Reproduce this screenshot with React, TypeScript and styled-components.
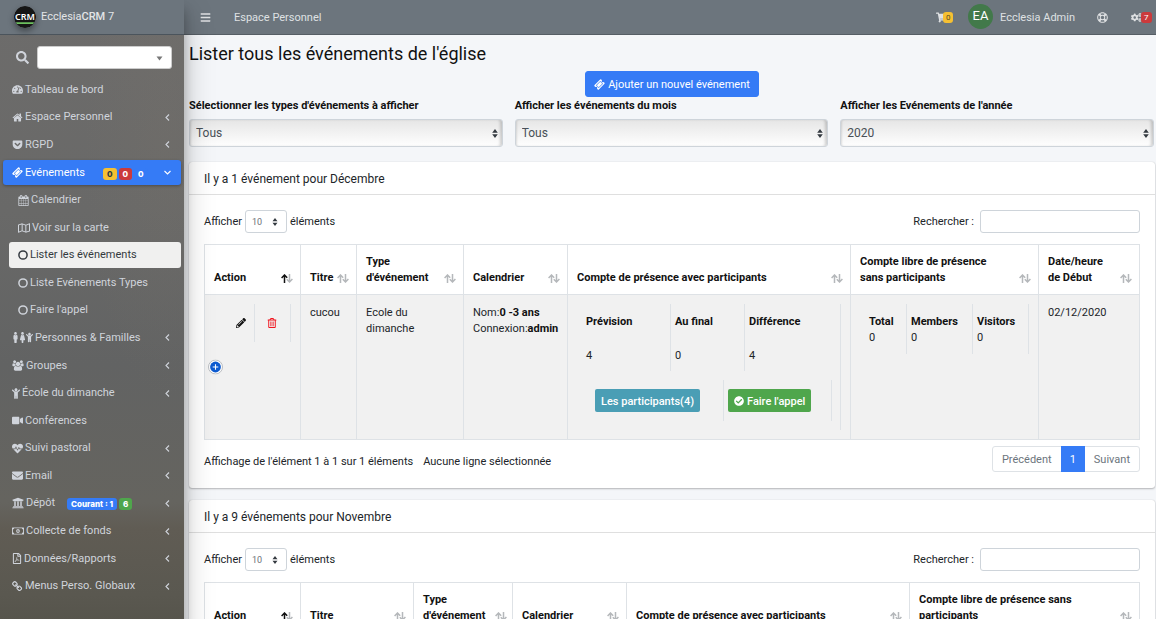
import React from "react";
import styled, { createGlobalStyle, css } from "styled-components";
import {
  FaBars, FaCheckCircle, FaChild, FaCogs, FaEnvelope, FaFemale,
  FaGetPocket, FaHeartbeat, FaMale, FaPencilAlt, FaRegFilePdf,
  FaRegLifeRing, FaRegMap, FaRegMoneyBillAlt, FaRegTrashAlt, FaSearch, FaShoppingCart,
  FaTachometerAlt, FaUniversity, FaVideo,
} from "react-icons/fa";

const GlobalStyle = createGlobalStyle`
  *, *::before, *::after { box-sizing: border-box; }
  body {
    margin: 0;
    background: #f4f6f9;
    color: #212529;
    font-family: Roboto, "Liberation Sans", sans-serif;
    font-size: 11px;
    line-height: 16px;
  }
  button, input, select { font-family: inherit; }
  ul { list-style: none; margin: 0; padding: 0; }
`;

const Shell = styled.div`
  display: grid;
  grid-template-columns: 184px minmax(0, 1fr);
  height: 100vh;
  overflow: hidden;
`;

/* ---------- sidebar ---------- */

const Sidebar = styled.aside`
  z-index: 2;
  display: flex;
  flex-direction: column;
  color: #d0d4db;
  background:
    radial-gradient(ellipse at 90% 22%, rgba(140, 125, 105, 0.1), transparent 35%),
    linear-gradient(#6d6c6b 0%, #696968 32%, #626363 55%, #65645f 76%, #605c54 80%, #5a5850 90%, #504f46 100%);
  box-shadow: 0 14px 28px rgba(0, 0, 0, 0.25), 0 10px 10px rgba(0, 0, 0, 0.22);
`;

const Brand = styled.a`
  display: flex;
  align-items: center;
  gap: 5px;
  height: 35px;
  padding: 0 14px;
  border-bottom: 1px solid #4b545c;
  background: #6c757d;
  color: #e3e5e7;
  font-size: 11px;
  text-decoration: none;
  b { font-weight: 500; }
  svg { border-radius: 50%; box-shadow: 0 3px 6px rgba(0, 0, 0, 0.4); }
`;

const SideSearch = styled.div`
  display: flex;
  align-items: center;
  gap: 8px;
  padding: 11px 12px 7px 16px;
  font-size: 13px;
`;

const SearchPick = styled.span`
  position: relative;
  flex: 1;
  display: flex;
  select {
    appearance: none;
    width: 100%;
    height: 23px;
    border: 1px solid #ccc;
    border-radius: 3px;
    background: #fff;
  }
  svg { position: absolute; right: 9px; top: 10px; pointer-events: none; }
`;

const Menu = styled.ul`
  display: grid;
  grid-auto-rows: 1fr;
  min-height: 524px;
`;

const SubMenu = styled.ul`
  display: contents;
`;

const Item = styled.li`
  display: flex;
`;

const MenuLink = styled.a<{ $tone?: "primary" | "light"; $sub?: boolean }>`
  flex: 1;
  display: flex;
  align-items: center;
  gap: 2px;
  margin: 1px 3px 1px ${(p) => (p.$sub ? 9 : 3)}px;
  padding: 0 9px;
  border-radius: 3px;
  color: inherit;
  text-decoration: none;
  ${(p) => p.$tone === "primary" && css`
    background: #357bf6;
    color: #fff;
    box-shadow: 0 1px 3px rgba(0, 0, 0, 0.3);
  `}
  ${(p) => p.$tone === "light" && css`
    background: #f0f0ef;
    color: #343a40;
  `}
`;

const MenuIcon = styled.span`
  display: flex;
  font-size: 11px;
`;

const Slim = styled.span<{ $width: number }>`
  display: flex;
  svg { width: ${(p) => p.$width}px; }
`;

const Chevron = styled.span`
  display: flex;
  margin-left: auto;
`;

const badgeColors = {
  yellow: "#f6c032",
  red: "#cb3a3c",
  blue: "#357bf6",
  green: "#4fa64c",
};

const Badge = styled.span<{ $color: keyof typeof badgeColors }>`
  padding: 0 4px;
  border-radius: 3px;
  background: ${(p) => badgeColors[p.$color]};
  color: ${(p) => (p.$color === "yellow" ? "#343a40" : "#fff")};
  font-family: Inter, sans-serif;
  font-size: 8px;
  font-weight: 800;
  line-height: 12px;
`;

const Badges = styled.span`
  display: flex;
  gap: 2px;
  margin: 2px 0 0 16px;
`;

const SmallBadges = styled(Badges)`
  margin-left: 10px;
`;

/* ---------- main column ---------- */

const Main = styled.div`
  min-width: 0;
  display: flex;
  flex-direction: column;
`;

const TopBar = styled.header`
  flex: none;
  display: flex;
  align-items: center;
  height: 35px;
  padding: 1px 14px 0 16px;
  border-bottom: 1px solid #565e65;
  background: #6c757d;
  color: #dfe1e3;
`;

const BarButton = styled.button`
  position: relative;
  display: flex;
  padding: 0;
  border: 0;
  background: none;
  color: inherit;
  font-size: 11px;
`;

const BarLink = styled.a`
  margin-left: 23px;
  color: inherit;
  text-decoration: none;
`;

const BarRight = styled.div`
  display: flex;
  align-items: center;
  margin-left: auto;
`;

const BarTools = styled.div`
  display: flex;
  gap: 23px;
`;

const BarBadge = styled.span<{ $color: "yellow" | "red" }>`
  position: absolute;
  left: ${(p) => (p.$color === "red" ? 10 : 7)}px;
  top: 0;
  padding: 0 3px;
  border-radius: 3px;
  background: ${(p) => badgeColors[p.$color]};
  color: ${(p) => (p.$color === "yellow" ? "#5b4d24" : "#fff")};
  font-size: 8px;
  line-height: 11px;
`;

const Avatar = styled.span`
  display: grid;
  place-items: center;
  width: 25px;
  height: 25px;
  margin: 0 7px 3px 21px;
  border-radius: 50%;
  background: #42794a;
  color: #fff;
  font-size: 13px;
`;

const UserName = styled.span`
  margin-right: 22px;
`;

const Content = styled.main`
  padding: 9px 1px 0 5px;
`;

const Title = styled.h1`
  margin: 0;
  color: #111;
  font-size: 18px;
  font-weight: 400;
  line-height: 20px;
`;

const AddRow = styled.div`
  display: flex;
  justify-content: center;
  padding-top: 7px;
`;

const AddButton = styled.button`
  display: flex;
  align-items: center;
  gap: 3px;
  height: 26px;
  padding: 0 8px;
  border: 1px solid #357bf6;
  border-radius: 3px;
  background: #357bf6;
  color: #fff;
  font-size: 11px;
`;

const Filters = styled.div`
  display: grid;
  grid-template-columns: repeat(3, minmax(0, 1fr));
  gap: 12px;
  margin: 0 1px 15px 0;
`;

const Field = styled.label`
  display: flex;
  flex-direction: column;
  gap: 5px;
  padding-top: 1px;
  color: #111;
  font-weight: 700;
`;

const PickBox = styled.span`
  position: relative;
  display: flex;
  svg { position: absolute; right: 5px; top: 10px; pointer-events: none; }
`;

const FilterSelect = styled.select`
  appearance: none;
  width: 100%;
  height: 28px;
  padding: 0 6px;
  border: 1px solid #ced4da;
  border-radius: 3px;
  background: linear-gradient(#e6e6e6, #fefefe);
  box-shadow: inset -3px 0 3px -1px rgba(0, 0, 0, 0.18), inset 2px 0 2px -1px rgba(0, 0, 0, 0.12);
  color: #495057;
  font-size: 12px;
`;

const Card = styled.section`
  margin-bottom: 12px;
  border-radius: 3px;
  background: #fff;
  box-shadow: 0 0 1px rgba(0, 0, 0, 0.2), 0 1px 2px rgba(0, 0, 0, 0.25);
`;

const CardTitle = styled.h2`
  margin: 0;
  padding: 9px 15px 7px;
  border-bottom: 1px solid #dfdfdf;
  font-size: 12px;
  font-weight: 400;
  line-height: 16px;
`;

const CardBody = styled.div`
  padding: 15px 15px 16px;
`;

const Tools = styled.div`
  display: flex;
  justify-content: space-between;
  margin-bottom: 11px;
`;

const ToolLabel = styled.label`
  display: flex;
  align-items: center;
  gap: 3px;
`;

const LengthPick = styled.span`
  position: relative;
  display: flex;
  select {
    appearance: none;
    width: 42px;
    height: 23px;
    padding: 0 6px;
    border: 1px solid #ced4da;
    border-radius: 3px;
    background: #fff;
    color: #6c7278;
    font-size: 9px;
  }
  svg { position: absolute; right: 9px; top: 8px; pointer-events: none; }
`;

const SearchInput = styled.input`
  width: 160px;
  height: 23px;
  margin-left: 3px;
  border: 1px solid #ced4da;
  border-radius: 3px;
  background: #fff;
`;

const Grid = styled.table`
  width: 100%;
  table-layout: fixed;
  border-collapse: collapse;
`;

const Th = styled.th`
  height: 50px;
  padding: 8px 7px 8px 9px;
  border: 1px solid #dee2e6;
  color: #111;
  font-weight: 700;
  text-align: left;
  vertical-align: bottom;
`;

const ThInner = styled.span<{ $tight?: boolean }>`
  display: flex;
  align-items: flex-end;
  justify-content: space-between;
  gap: ${(p) => (p.$tight ? 3 : 10)}px;
  svg { flex: none; margin-bottom: 3px; }
`;

const Td = styled.td<{ $nested?: boolean }>`
  position: relative;
  height: 145px;
  padding: ${(p) => (p.$nested ? 9 : 10)}px 9px 9px;
  border: 1px solid #dee2e6;
  background: #f1f1f1;
  vertical-align: top;
  b { color: #111; font-weight: 700; }
`;

const Actions = styled.div`
  display: flex;
  justify-content: flex-end;
`;

const ActionCell = styled.span`
  display: flex;
  align-items: center;
  justify-content: center;
  width: 36px;
  height: 38px;
  padding-right: 1px;
  border-right: 1px solid #dee2e6;
  &:first-child { padding-left: 9px; }
`;

const IconButton = styled.button<{ $danger?: boolean }>`
  display: flex;
  padding: 0;
  border: 0;
  background: none;
  color: ${(p) => (p.$danger ? "#f0141e" : "#111")};
  font-size: 10px;
`;

const ExpandButton = styled.button`
  position: absolute;
  left: 3px;
  top: 50%;
  transform: translateY(-50%);
  display: flex;
  padding: 0;
  border: 0;
  background: none;
`;

const Presence = styled.div`
  height: 126px;
  border-right: 1px solid #dee2e6;
`;

const Stats = styled.dl<{ $cols: string; $tall?: boolean }>`
  display: grid;
  grid-template-columns: ${(p) => p.$cols};
  margin: 0;
  div {
    padding: ${(p) => (p.$tall ? "10px 4px 7px" : "10px 4px 8px")};
    border-right: 1px solid #dee2e6;
  }
  div:first-child { padding-left: 9px; }
  div:last-child { ${(p) => p.$tall && "border-right: 0;"} }
  dt { color: #111; font-weight: 700; }
  dd { margin: ${(p) => (p.$tall ? 18 : 0)}px 0 0; }
`;

const PresenceActions = styled.div`
  display: grid;
  grid-template-columns: 129px 108px;
  margin: 9px 0 0 18px;
  span {
    height: 41px;
    padding: 9px 4px 9px 0;
    border-right: 1px solid #dee2e6;
  }
  span + span { padding-left: 4px; }
`;

const SmallButton = styled.button<{ $green?: boolean }>`
  display: flex;
  align-items: center;
  gap: 3px;
  height: 23px;
  padding: 1px 6px 0;
  border: 0;
  border-radius: 2px;
  background: ${(p) => (p.$green ? "#4fa64c" : "#4a9eb5")};
  color: #fff;
  font-size: 11px;
  font-weight: 500;
  white-space: nowrap;
  svg { font-size: 10px; }
`;

const Foot = styled.div`
  display: flex;
  align-items: center;
  gap: 10px;
  margin-top: 6px;
`;

const FootText = styled.span`
  padding-top: 5px;
`;

const Pager = styled.nav`
  display: flex;
  margin-left: auto;
  border: 1px solid #dee2e6;
  border-radius: 3px;
`;

const PageButton = styled.button<{ $on?: boolean }>`
  height: 26px;
  margin: -1px 0;
  padding: 0 9px;
  border: 0;
  background: ${(p) => (p.$on ? "#357bf6" : "transparent")};
  color: ${(p) => (p.$on ? "#fff" : "#6c757d")};
  font-size: 11px;
`;

/* ---------- icons ---------- */

const legacyPaths = {
  home: "M1472 992v480q0 26-19 45t-45 19h-384v-384h-256v384h-384q-26 0-45-19t-19-45v-480q0-1 .5-3t.5-3l575-474 575 474q1 2 1 6zm223-69l-62 74q-8 9-21 11h-3q-13 0-21-7l-692-577-692 577q-12 8-24 7-13-2-21-11l-62-74q-8-10-7-23.5t11-21.5l719-599q32-26 76-26t76 26l244 204v-195q0-14 9-23t23-9h192q14 0 23 9t9 23v408l219 182q10 8 11 21.5t-7 23.5z",
  calendar: "M192 1664h288v-288h-288v288zm352 0h320v-288h-320v288zm-352-352h288v-320h-288v320zm352 0h320v-320h-320v320zm-352-384h288v-288h-288v288zm736 736h320v-288h-320v288zm-384-736h320v-288h-320v288zm768 736h288v-288h-288v288zm-384-352h320v-320h-320v320zm-352-864v-288q0-13-9.5-22.5t-22.5-9.5h-64q-13 0-22.5 9.5t-9.5 22.5v288q0 13 9.5 22.5t22.5 9.5h64q13 0 22.5-9.5t9.5-22.5zm736 864h288v-320h-288v320zm-384-384h320v-288h-320v288zm384 0h288v-288h-288v288zm32-480v-288q0-13-9.5-22.5t-22.5-9.5h-64q-13 0-22.5 9.5t-9.5 22.5v288q0 13 9.5 22.5t22.5 9.5h64q13 0 22.5-9.5t9.5-22.5zm384-64v1280q0 52-38 90t-90 38h-1408q-52 0-90-38t-38-90v-1280q0-52 38-90t90-38h128v-96q0-66 47-113t113-47h64q66 0 113 47t47 113v96h384v-96q0-66 47-113t113-47h64q66 0 113 47t47 113v96h128q52 0 90 38t38 90z",
  users: "M657 896q-162 5-265 128h-134q-82 0-138-40.5t-56-118.5q0-353 124-353 6 0 43.5 21t97.5 42.5 119 21.5q67 0 133-23-5 37-5 66 0 139 81 256zm1071 637q0 120-73 189.5t-194 69.5h-874q-121 0-194-69.5t-73-189.5q0-53 3.5-103.5t14-109 26.5-108.5 43-97.5 62-81 85.5-53.5 111.5-20q10 0 43 21.5t73 48 107 48 135 21.5 135-21.5 107-48 73-48 43-21.5q61 0 111.5 20t85.5 53.5 62 81 43 97.5 26.5 108.5 14 109 3.5 103.5zm-1024-1277q0 106-75 181t-181 75-181-75-75-181 75-181 181-75 181 75 75 181zm704 384q0 159-112.5 271.5t-271.5 112.5-271.5-112.5-112.5-271.5 112.5-271.5 271.5-112.5 271.5 112.5 112.5 271.5zm576 225q0 78-56 118.5t-138 40.5h-134q-103-123-265-128 81-117 81-256 0-29-5-66 66 23 133 23 59 0 119-21.5t97.5-42.5 43.5-21q124 0 124 353zm-128-609q0 106-75 181t-181 75-181-75-75-181 75-181 181-75 181 75 75 181z",
  ticket: "M1024 452l316 316-572 572-316-316zm-211 979l618-618q19-19 19-45t-19-45l-362-362q-18-18-45-18t-45 18l-618 618q-19 19-19 45t19 45l362 362q18 18 45 18t45-18zm889-637l-907 908q-37 37-90.5 37t-90.5-37l-126-126q56-56 56-136t-56-136-136-56-136 56l-125-126q-37-37-37-90.5t37-90.5l907-906q37-37 90.5-37t90.5 37l125 125q-56 56-56 136t56 136 136 56 136-56l126 125q37 37 37 90.5t-37 90.5z",
  chain: "M1456 1216q0-40-28-68l-208-208q-28-28-68-28-42 0-72 32 3 3 19 18.5t21.5 21.5 15 19 13 25.5 3.5 27.5q0 40-28 68t-68 28q-15 0-27.5-3.5t-25.5-13-19-15-21.5-21.5-18.5-19q-33 31-33 73 0 40 28 68l206 207q27 27 68 27 40 0 68-26l147-146q28-28 28-67zm-703-705q0-40-28-68l-206-207q-28-28-68-28-39 0-68 27l-147 146q-28 28-28 67 0 40 28 68l208 208q27 27 68 27 42 0 72-31-3-3-19-18.5t-21.5-21.5-15-19-13-25.5-3.5-27.5q0-40 28-68t68-28q15 0 27.5 3.5t25.5 13 19 15 21.5 21.5 18.5 19q33-31 33-73zm895 705q0 120-85 203l-147 146q-83 83-203 83-121 0-204-85l-206-207q-83-83-83-203 0-123 88-209l-88-88q-86 88-208 88-120 0-204-84l-208-208q-84-84-84-204t85-203l147-146q83-83 203-83 121 0 204 85l206 207q83 83 83 203 0 123-88 209l88 88q86-88 208-88 120 0 204 84l208 208q84 84 84 204z",
};

const LegacyIcon = ({ name, width = 12, box = 1792 }: {
  name: keyof typeof legacyPaths;
  width?: number;
  box?: number;
}) => (
  <svg width={width} height="11" viewBox={`0 0 ${box} 1792`} fill="currentColor">
    <path d={legacyPaths[name]} />
  </svg>
);

const FamilyIcon = () => (
  <Slim $width={7}><FaMale /><FaFemale /><FaChild /></Slim>
);

const CircleIcon = () => (
  <svg width="10" height="10" viewBox="0 0 10 10" fill="none" stroke="currentColor" strokeWidth="1.5">
    <circle cx="5" cy="5" r="4.1" />
  </svg>
);

const Angle = ({ down }: { down?: boolean }) => (
  <svg width="9" height="9" viewBox="0 0 9 9" fill="none" stroke="currentColor" strokeWidth="1.1">
    <path d={down ? "M1.5 3L4.5 6L7.5 3" : "M6 1.5L3 4.5L6 7.5"} />
  </svg>
);

const UpDown = ({ size = 9 }: { size?: number }) => (
  <svg width="6" height={size} viewBox="0 0 6 9" fill="#343a40"><path d="M3 0L5.8 3.7H0.2zM3 9L0.2 5.3H5.8z" /></svg>
);

const SortIcon = ({ active }: { active?: boolean }) => (
  <svg width="12" height="9" viewBox="0 0 12 9" fill="none" strokeWidth="1.5">
    <path d="M3.5 9V1M0.6 4L3.5 1L6.2 3.8" stroke={active ? "#111" : "#b5b8bb"} />
    <path d="M8.5 0V8M5.8 5.2L8.5 8L11.4 5" stroke="#b5b8bb" />
  </svg>
);

const Logo = () => (
  <svg width="22" height="22" viewBox="0 0 22 22">
    <circle cx="11" cy="11" r="11" fill="#161616" />
    <text x="11" y="14" textAnchor="middle" fontFamily="Noto Sans, sans-serif" fontSize="9" fontWeight="600" fill="#fff">CRM</text>
    <path d="M2 16.2H20L19.2 18H2.8z" fill="#6cc05f" />
  </svg>
);

const PlusIcon = () => (
  <svg width="15" height="15" viewBox="0 0 15 15">
    <circle cx="7.5" cy="7.5" r="7" fill="#fff" stroke="#b9bcc0" />
    <circle cx="7.5" cy="7.5" r="5.4" fill="#0d5bd0" />
    <path d="M7.5 4.7V10.3M4.7 7.5H10.3" stroke="#fff" strokeWidth="1.1" />
  </svg>
);

/* ---------- data-driven parts ---------- */

interface Entry {
  label: string;
  icon: React.ReactNode;
  arrow?: boolean;
  badges?: React.ReactNode;
}

const before: Entry[] = [
  { label: "Tableau de bord", icon: <FaTachometerAlt /> },
  { label: "Espace Personnel", icon: <LegacyIcon name="home" width={11} />, arrow: true },
  { label: "RGPD", icon: <FaGetPocket />, arrow: true },
];

const eventEntries: Entry[] = [
  { label: "Calendrier", icon: <LegacyIcon name="calendar" width={11} /> },
  { label: "Voir sur la carte", icon: <FaRegMap size={12} /> },
  { label: "Lister les événements", icon: <CircleIcon /> },
  { label: "Liste Evénements Types", icon: <CircleIcon /> },
  { label: "Faire l'appel", icon: <CircleIcon /> },
];

const after: Entry[] = [
  { label: "Personnes & Familles", icon: <FamilyIcon />, arrow: true },
  { label: "Groupes", icon: <LegacyIcon name="users" box={2048} />, arrow: true },
  { label: "École du dimanche", icon: <Slim $width={8}><FaChild /></Slim>, arrow: true },
  { label: "Conférences", icon: <FaVideo /> },
  { label: "Suivi pastoral", icon: <FaHeartbeat />, arrow: true },
  { label: "Email", icon: <FaEnvelope />, arrow: true },
  {
    label: "Dépôt",
    icon: <FaUniversity size={12} />,
    arrow: true,
    badges: (
      <SmallBadges><Badge $color="blue">Courant : 1</Badge><Badge $color="green">6</Badge></SmallBadges>
    ),
  },
  { label: "Collecte de fonds", icon: <FaRegMoneyBillAlt size={12} />, arrow: true },
  { label: "Données/Rapports", icon: <Slim $width={10}><FaRegFilePdf /></Slim>, arrow: true },
  { label: "Menus Perso. Globaux", icon: <LegacyIcon name="chain" width={11} />, arrow: true },
];

const MenuEntry = ({ entry, sub, active }: { entry: Entry; sub?: boolean; active?: boolean }) => (
  <Item>
    <MenuLink href="#" $sub={sub} $tone={active ? "light" : undefined}>
      <MenuIcon>{entry.icon}</MenuIcon>
      {entry.label}
      {entry.badges}
      {entry.arrow && <Chevron><Angle /></Chevron>}
    </MenuLink>
  </Item>
);

interface Column {
  title: string;
  width: number;
}

const decemberColumns: Column[] = [
  { title: "Action", width: 96 },
  { title: "Titre", width: 56 },
  { title: "Type d'événement", width: 107 },
  { title: "Calendrier", width: 104 },
  { title: "Compte de présence avec participants", width: 283 },
  { title: "Compte libre de présence sans participants", width: 188 },
  { title: "Date/heure de Début", width: 101 },
];

const novemberColumns: Column[] = [
  { title: "Action", width: 96 },
  { title: "Titre", width: 113 },
  { title: "Type d'événement", width: 99 },
  { title: "Calendrier", width: 114 },
  { title: "Compte de présence avec participants", width: 283 },
  { title: "Compte libre de présence sans participants", width: 230 },
];

const EventCard = ({ title, columns, children, footer }: {
  title: string;
  columns: Column[];
  children?: React.ReactNode;
  footer?: React.ReactNode;
}) => {
  const total = columns.reduce((sum, c) => sum + c.width, 0);
  return (
    <Card>
      <CardTitle>{title}</CardTitle>
      <CardBody>
        <Tools>
          <ToolLabel>
            Afficher
            <LengthPick>
              <select defaultValue="10"><option>10</option><option>25</option><option>50</option></select>
              <UpDown size={8} />
            </LengthPick>
            éléments
          </ToolLabel>
          <ToolLabel>
            Rechercher :
            <SearchInput type="search" />
          </ToolLabel>
        </Tools>
        <Grid>
          <colgroup>
            {columns.map((c) => (
              <col key={c.title} style={{ width: `${(c.width / total) * 100}%` }} />
            ))}
          </colgroup>
          <thead>
            <tr>
              {columns.map((c, i) => (
                <Th key={c.title} scope="col">
                  <ThInner $tight={c.width < 60}>{c.title}<SortIcon active={i === 0} /></ThInner>
                </Th>
              ))}
            </tr>
          </thead>
          {children && <tbody>{children}</tbody>}
        </Grid>
        {footer}
      </CardBody>
    </Card>
  );
};

const FilterField = ({ label, value }: { label: string; value: string }) => (
  <Field>
    {label}
    <PickBox>
      <FilterSelect defaultValue={value}><option>{value}</option></FilterSelect>
      <UpDown />
    </PickBox>
  </Field>
);

export default function App() {
  return (
    <>
      <GlobalStyle />
      <Shell>
        <Sidebar>
          <Brand href="#"><Logo /><span>Ecclesia<b>CRM</b> 7</span></Brand>
          <SideSearch>
            <FaSearch />
            <SearchPick>
              <select aria-label="Recherche" />
              <svg width="7" height="5" viewBox="0 0 7 5" fill="#777"><path d="M0.5 0.5H6.5L3.5 4.5z" /></svg>
            </SearchPick>
          </SideSearch>
          <nav>
            <Menu>
              {before.map((e) => <MenuEntry key={e.label} entry={e} />)}
              <Item>
                <MenuLink href="#" $tone="primary">
                  <MenuIcon><LegacyIcon name="ticket" width={11} /></MenuIcon>
                  Evénements
                  <Badges>
                    <Badge $color="yellow">0</Badge>
                    <Badge $color="red">0</Badge>
                    <Badge $color="blue">0</Badge>
                  </Badges>
                  <Chevron><Angle down /></Chevron>
                </MenuLink>
              </Item>
              <SubMenu>
                {eventEntries.map((e, i) => <MenuEntry key={e.label} entry={e} sub active={i === 2} />)}
              </SubMenu>
              {after.map((e) => <MenuEntry key={e.label} entry={e} />)}
            </Menu>
          </nav>
        </Sidebar>

        <Main>
          <TopBar>
            <BarButton aria-label="Menu"><FaBars /></BarButton>
            <BarLink href="#">Espace Personnel</BarLink>
            <BarRight>
              <BarButton aria-label="Panier"><FaShoppingCart /><BarBadge $color="yellow">0</BarBadge></BarButton>
              <Avatar>EA</Avatar>
              <UserName>Ecclesia Admin</UserName>
              <BarTools>
                <BarButton aria-label="Aide"><FaRegLifeRing /></BarButton>
                <BarButton aria-label="Réglages"><FaCogs /><BarBadge $color="red">7</BarBadge></BarButton>
              </BarTools>
            </BarRight>
          </TopBar>

          <Content>
            <Title>Lister tous les événements de l'église</Title>
            <AddRow>
              <AddButton><LegacyIcon name="ticket" width={11} /> Ajouter un nouvel événement</AddButton>
            </AddRow>
            <Filters>
              <FilterField label="Sélectionner les types d'événements à afficher" value="Tous" />
              <FilterField label="Afficher les événements du mois" value="Tous" />
              <FilterField label="Afficher les Evénements de l'année" value="2020" />
            </Filters>

            <EventCard
              title="Il y a 1 événement pour Décembre"
              columns={decemberColumns}
              footer={
                <Foot>
                  <FootText>Affichage de l'élément 1 à 1 sur 1 éléments</FootText>
                  <FootText>Aucune ligne sélectionnée</FootText>
                  <Pager aria-label="Pagination">
                    <PageButton>Précédent</PageButton>
                    <PageButton $on>1</PageButton>
                    <PageButton>Suivant</PageButton>
                  </Pager>
                </Foot>
              }
            >
              <tr>
                <Td $nested>
                  <Actions>
                    <ActionCell><IconButton aria-label="Modifier"><FaPencilAlt /></IconButton></ActionCell>
                    <ActionCell><IconButton $danger aria-label="Supprimer"><FaRegTrashAlt /></IconButton></ActionCell>
                  </Actions>
                  <ExpandButton aria-label="Détails"><PlusIcon /></ExpandButton>
                </Td>
                <Td>cucou</Td>
                <Td>Ecole du dimanche</Td>
                <Td>Nom:<b>0 -3 ans</b><br />Connexion:<b>admin</b></Td>
                <Td $nested>
                  <Presence>
                    <Stats $cols="94px 74px 1fr" $tall>
                      <div><dt>Prévision</dt><dd>4</dd></div>
                      <div><dt>Au final</dt><dd>0</dd></div>
                      <div><dt>Différence</dt><dd>4</dd></div>
                    </Stats>
                    <PresenceActions>
                      <span><SmallButton>Les participants(4)</SmallButton></span>
                      <span><SmallButton $green><FaCheckCircle /> Faire l'appel</SmallButton></span>
                    </PresenceActions>
                  </Presence>
                </Td>
                <Td $nested>
                  <Stats $cols="47px 66px 1fr">
                    <div><dt>Total</dt><dd>0</dd></div>
                    <div><dt>Members</dt><dd>0</dd></div>
                    <div><dt>Visitors</dt><dd>0</dd></div>
                  </Stats>
                </Td>
                <Td>02/12/2020</Td>
              </tr>
            </EventCard>

            <EventCard title="Il y a 9 événements pour Novembre" columns={novemberColumns} />
          </Content>
        </Main>
      </Shell>
    </>
  );
}
